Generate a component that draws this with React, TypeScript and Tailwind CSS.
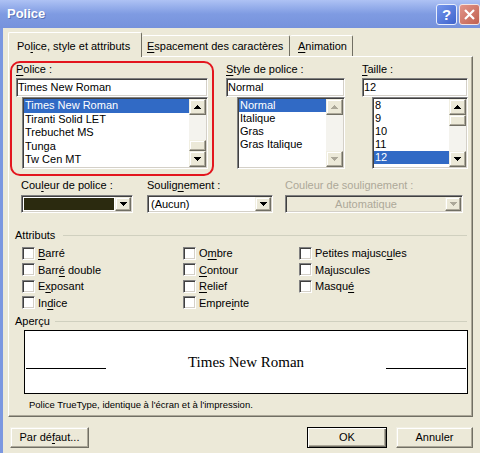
import React from 'react';

// classic 3D borders
const sunken =
  'border border-t-[#808080] border-l-[#808080] border-r-white border-b-white shadow-[inset_1px_1px_0_#404040,inset_-1px_-1px_0_#d4d0c8]';
const raised =
  'border border-t-[#f1efe2] border-l-[#f1efe2] border-r-[#716f64] border-b-[#716f64] shadow-[inset_-1px_-1px_0_#aca899,inset_1px_1px_0_#ffffff] bg-[#ece9d8]';

const U = ({ children }: { children: React.ReactNode }) => (
  <span className="underline decoration-1 underline-offset-[2px]">{children}</span>
);

const Arrow = ({ dir, disabled }: { dir: 'up' | 'down'; disabled?: boolean }) => (
  <svg width="7" height="4" viewBox="0 0 7 4" shapeRendering="crispEdges" className={disabled ? 'fill-[#aca899]' : 'fill-black'}>
    <path d={dir === 'up' ? 'M3 0h1v1h1v1h1v1h1v1H0V3h1V2h1V1h1z' : 'M0 0h7v1H6v1H5v1H4v1H3V3H2V2H1V1H0z'} />
  </svg>
);

const ScrollBtn = ({ dir, disabled }: { dir: 'up' | 'down'; disabled?: boolean }) => (
  <div className={`h-[16px] w-full flex items-center justify-center ${raised}`}>
    <Arrow dir={dir} disabled={disabled} />
  </div>
);

interface ListProps {
  items: string[];
  selected: number;
  rowH: number;
  thumb?: 'top' | 'bottom';
  disabled?: boolean;
  className: string;
}

const ListBox = ({ items, selected, rowH, thumb, disabled, className }: ListProps) => (
  <div className={`h-[72px] bg-white ${sunken} p-[1px] flex ${className}`}>
    <div className="flex-1 overflow-hidden">
      {items.map((it, i) => (
        <div
          key={it}
          style={{ height: rowH, lineHeight: `${rowH}px` }}
          className={`pl-[1px] whitespace-nowrap ${i === selected ? 'bg-[#316ac5] text-white' : ''}`}
        >
          {it}
        </div>
      ))}
    </div>
    <div className="w-[17px] h-full flex flex-col bg-[#f4f3ee]">
      <ScrollBtn dir="up" disabled={disabled} />
      <div className="flex-1 flex flex-col">
        {thumb === 'top' && <div className={`h-[11px] ${raised}`} />}
        {thumb === 'bottom' && <div className={`h-[11px] mt-auto ${raised}`} />}
      </div>
      <ScrollBtn dir="down" disabled={disabled} />
    </div>
  </div>
);

const Combo = ({ children, disabled, className }: { children?: React.ReactNode; disabled?: boolean; className: string }) => (
  <div className={`h-[18px] ${disabled ? 'bg-[#ece9d8]' : 'bg-white'} ${sunken} p-[1px] flex ${className}`}>
    <div className="flex-1 flex">{children}</div>
    <div className={`w-[16px] h-full flex items-center justify-center ${raised}`}>
      <Arrow dir="down" disabled={disabled} />
    </div>
  </div>
);

const Check = ({ children }: { children: React.ReactNode }) => (
  <div className="h-[16.5px] flex items-center gap-[3px] whitespace-nowrap">
    <span className={`w-[13px] h-[13px] shrink-0 bg-white ${sunken}`} />
    <span>{children}</span>
  </div>
);

const Legend = ({ label, gap }: { label: string; gap: string }) => (
  <div className="h-[13px] flex items-center ml-[6px] mr-[5px]">
    <span className="leading-[13px]">{label}</span>
    <div className={`flex-1 border-t border-[#d0d0bf] ${gap}`} />
  </div>
);

export default function App() {
  return (
    <div className="w-[480px] h-[453px] overflow-hidden flex flex-col bg-[#ece9d8] text-[11px] text-black font-['Liberation_Sans',Arial,sans-serif]">
      {/* title bar */}
      <div className="h-[28px] shrink-0 flex items-center bg-linear-to-b from-[#aec2f4] via-[#7f9be2] to-[#7692dc] pl-[7px]">
        <span className="text-white font-bold text-[13px] [text-shadow:1px_1px_0_#5a72b6]">Police</span>
        <div className="ml-auto flex gap-[2px] mt-[1px]">
          <div className="w-[21px] h-[21px] rounded-[3px] border border-[#e8eefc] bg-linear-to-br from-[#7596ec] to-[#3f63cc] flex items-center justify-center text-white font-bold text-[15px] leading-none">
            ?
          </div>
          <div className="w-[21px] h-[21px] rounded-[3px] border border-[#f4e4e0] bg-linear-to-br from-[#e2958a] to-[#c0604f] flex items-center justify-center">
            <svg width="11" height="11" viewBox="0 0 11 11">
              <path d="M1 1L10 10M10 1L1 10" stroke="white" strokeWidth="2.2" />
            </svg>
          </div>
        </div>
      </div>

      {/* body */}
      <div className="flex-1 border-l-[3px] border-[#7b97e0] pl-[5px] flex flex-col">
        {/* tabs */}
        <div className="mt-[4px] h-[24px] flex items-end">
          <div className="relative z-10 -mb-px h-[25px] w-[134px] bg-[#ece9d8] border-t border-l border-t-white border-l-white border-r border-r-[#716f64] rounded-t-[2px] pl-[8px] pt-[7px] leading-[13px]">
            Po<U>l</U>ice, style et attributs
          </div>
          <div className="h-[21px] w-[148px] border-t border-t-white border-r border-r-[#716f64] rounded-t-[2px] pl-[5px] pt-[4px] leading-[13px]">
            <U>E</U>spacement des caractères
          </div>
          <div className="h-[21px] w-[63px] border-t border-t-white border-r border-r-[#716f64] rounded-t-[2px] pl-[8px] pt-[4px] leading-[13px]">
            <U>A</U>nimation
          </div>
        </div>

        {/* tab panel */}
        <div className="w-[465px] h-[361px] shrink-0 border border-t-white border-l-white border-r-[#716f64] border-b-[#716f64] shadow-[inset_-1px_-1px_0_#aca899] flex flex-col">
          {/* font lists */}
          <div className="flex items-start">
            <div className="ml-[1px] mt-[4px] w-[204px] h-[115px] border-2 border-[#e3161e] rounded-[10px] pl-[4px]">
              <div className="h-[13px] leading-[13px]">
                <U>P</U>olice :
              </div>
              <div className={`mt-[2px] h-[19px] w-[192px] bg-white ${sunken} pl-[1px] leading-[17px]`}>Times New Roman</div>
              <ListBox
                className="ml-[6px] w-[186px]"
                items={['Times New Roman', 'Tiranti Solid LET', 'Trebuchet MS', 'Tunga', 'Tw Cen MT']}
                selected={0}
                rowH={13.6}
                thumb="bottom"
              />
            </div>

            <div className="ml-[12px] mt-[6px]">
              <div className="h-[13px] leading-[13px]">
                <U>S</U>tyle de police :
              </div>
              <div className={`mt-[2px] h-[19px] w-[119px] bg-white ${sunken} pl-[1px] leading-[17px]`}>Normal</div>
              <ListBox
                className="ml-[11px] w-[108px]"
                items={['Normal', 'Italique', 'Gras', 'Gras Italique']}
                selected={0}
                rowH={13}
                disabled
              />
            </div>

            <div className="ml-[17px] mt-[6px]">
              <div className="h-[13px] leading-[13px]">
                <U>T</U>aille :
              </div>
              <div className={`mt-[2px] h-[19px] w-[106px] bg-white ${sunken} pl-[1px] leading-[17px]`}>12</div>
              <ListBox
                className="ml-[10px] w-[96px]"
                items={['8', '9', '10', '11', '12']}
                selected={4}
                rowH={13}
                thumb="top"
              />
            </div>
          </div>

          {/* colour / underline */}
          <div className="mt-[3px] flex">
            <div className="ml-[12px] w-[112px]">
              <div className="h-[13px] leading-[13px]">
                Cou<U>l</U>eur de police :
              </div>
              <Combo className="mt-[3px] w-[112px]">
                <div className="flex-1 m-[1px] bg-[#2b2a0f]" />
              </Combo>
            </div>
            <div className="ml-[14px] w-[126px]">
              <div className="h-[13px] leading-[13px]">
                Soulig<U>n</U>ement :
              </div>
              <Combo className="mt-[3px] w-[126px]">
                <span className="pl-[2px] leading-[14px]">(Aucun)</span>
              </Combo>
            </div>
            <div className="ml-[12px] w-[178px]">
              <div className="h-[13px] leading-[13px] text-[#aca899]">Couleur de soulignement :</div>
              <Combo className="mt-[3px] w-[178px]" disabled>
                <span className="flex-1 text-center leading-[14px] text-[#aca899]">Automatique</span>
              </Combo>
            </div>
          </div>

          {/* attributes */}
          <div className="mt-[16px]">
            <Legend label="Attributs" gap="ml-[8px]" />
          </div>
          <div className="mt-[3px] flex">
            <div className="ml-[13px] w-[161px] flex flex-col">
              <Check>
                <U>B</U>arré
              </Check>
              <Check>
                Barr<U>é</U> double
              </Check>
              <Check>
                E<U>x</U>posant
              </Check>
              <Check>
                In<U>d</U>ice
              </Check>
            </div>
            <div className="w-[116px] flex flex-col">
              <Check>
                O<U>m</U>bre
              </Check>
              <Check>
                <U>C</U>ontour
              </Check>
              <Check>
                <U>R</U>elief
              </Check>
              <Check>
                Empre<U>i</U>nte
              </Check>
            </div>
            <div className="flex flex-col">
              <Check>
                Petites majusc<U>u</U>les
              </Check>
              <Check>
                Ma<U>j</U>uscules
              </Check>
              <Check>
                Masqu<U>é</U>
              </Check>
            </div>
          </div>

          {/* preview */}
          <div className="mt-[4px]">
            <Legend label="Aperçu" gap="ml-[5px]" />
          </div>
          <div className="mt-[2px] ml-[15px] w-[444px] h-[64px] border border-black bg-white flex items-center">
            <div className="ml-[1px] w-[80px] h-px bg-black self-start mt-[37px]" />
            <div className="flex-1 text-center text-[15px] font-['Liberation_Serif','Times_New_Roman',serif]">Times New Roman</div>
            <div className="mr-[1px] w-[80px] h-px bg-black self-start mt-[37px]" />
          </div>
          <div className="mt-[5px] ml-[20px] text-[9.5px] leading-[12px]">
            Police TrueType, identique à l'écran et à l'impression.
          </div>
        </div>

        {/* buttons */}
        <div className="mt-[10px] flex">
          <div className={`ml-[2px] w-[79px] h-[21px] flex items-center justify-center ${raised}`}>
            Par dé<U>f</U>aut...
          </div>
          <div className="ml-auto w-[80px] h-[21px] border border-black bg-[#ece9d8] shadow-[inset_1px_1px_0_#ffffff,inset_-1px_-1px_0_#716f64,inset_-2px_-2px_0_#aca899] flex items-center justify-center">
            OK
          </div>
          <div className={`ml-[9px] mr-[7px] w-[77px] h-[21px] flex items-center justify-center ${raised}`}>
            Annuler
          </div>
        </div>
      </div>
    </div>
  );
}
